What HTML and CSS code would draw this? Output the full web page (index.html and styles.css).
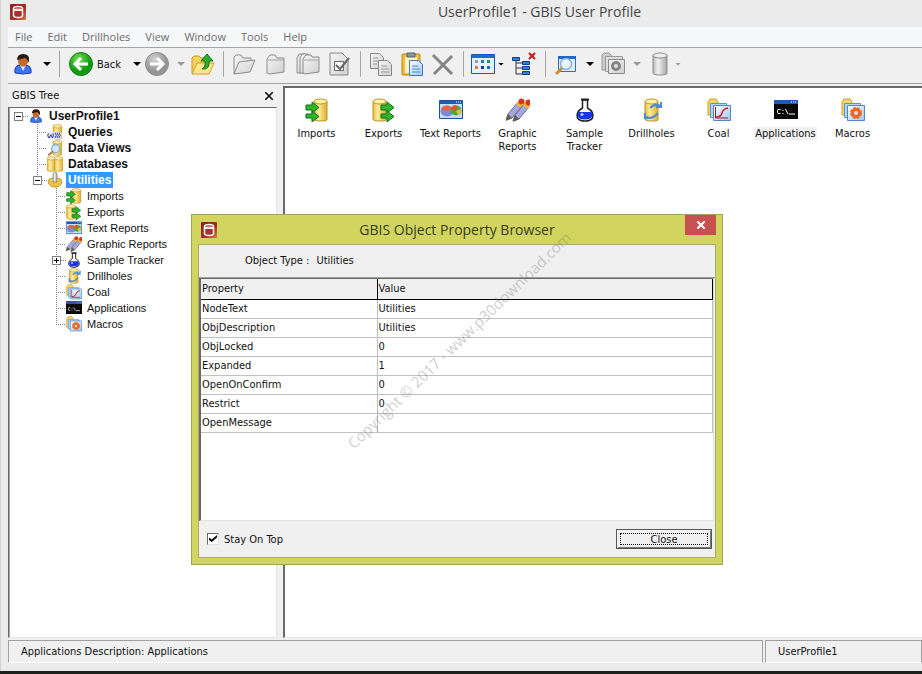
FILE: index.html
```html
<!DOCTYPE html>
<html lang="en">
<head>
  <meta charset="UTF-8">
  <meta name="viewport" content="width=device-width, initial-scale=1.0">
  <title>UserProfile1 - GBIS User Profile</title>
  <link rel="stylesheet" href="styles.css">
</head>
<body>

<!-- Icon set -->
<svg class="sprite" width="0" height="0" aria-hidden="true">
  <defs>
    <linearGradient id="gold"><stop offset="0" stop-color="#e8b83a"/><stop offset=".35" stop-color="#ffee9c"/><stop offset="1" stop-color="#e0ab2c"/></linearGradient>
    <linearGradient id="grey"><stop offset="0" stop-color="#b5b5b5"/><stop offset=".35" stop-color="#f2f2f2"/><stop offset="1" stop-color="#a4a4a4"/></linearGradient>
    <linearGradient id="paper" x2="1" y2="1"><stop offset="0" stop-color="#f6f6f6"/><stop offset="1" stop-color="#cfcfcf"/></linearGradient>
    <linearGradient id="sky" x2="1" y2="1"><stop offset="0" stop-color="#ffffff"/><stop offset="1" stop-color="#9cc8f4"/></linearGradient>
    <radialGradient id="greenBall" cx=".4" cy=".3"><stop offset="0" stop-color="#7be05a"/><stop offset="1" stop-color="#129a12"/></radialGradient>
    <radialGradient id="greyBall" cx=".4" cy=".3"><stop offset="0" stop-color="#d4d4d4"/><stop offset="1" stop-color="#959595"/></radialGradient>
    <linearGradient id="red" x2="1" y2="1"><stop offset="0" stop-color="#8e1f1f"/><stop offset=".6" stop-color="#a62c28"/><stop offset="1" stop-color="#d9803c"/></linearGradient>
  </defs>
  <symbol id="i-logo" viewBox="0 0 16 16">
    <rect width="16" height="16" rx="1" fill="url(#red)"/>
    <path d="M3.500 4.500q0-2 4.500-2t4.500 2v7q0 2-4.500 2t-4.500-2z" fill="#a83030" stroke="#fff" stroke-width="1.500"/>
    <path d="M3.500 5h9v2h-9z" fill="#fff"/><ellipse cx="8" cy="4.500" rx="3" ry="1" fill="#c98080"/>
  </symbol>
  <symbol id="i-user" viewBox="0 0 24 24">
    <path d="M4 21q-1-7 4-8h7q6 1 5 8-8 2-16 0z" fill="#3f74f0" stroke="#1c3fa8"/>
    <path d="M9 13h6l-3 6z" fill="#dfe9ff"/>
    <ellipse cx="12" cy="9" rx="5" ry="5.500" fill="#c66a2a"/>
    <path d="M6 8q0-6 6-6 7 0 6 7l-1 2q0-4-3-5-4 1-8 2z" fill="#2b1a12"/>
  </symbol>
  <symbol id="i-back" viewBox="0 0 24 24">
    <circle cx="12" cy="12" r="11.500" fill="url(#greenBall)" stroke="#0e8010"/>
    <path d="M19 12H6m6-6-6 6 6 6" fill="none" stroke="#fff" stroke-width="3"/>
  </symbol>
  <symbol id="i-forward" viewBox="0 0 24 24">
    <circle cx="12" cy="12" r="11.500" fill="url(#greyBall)" stroke="#8c8c8c"/>
    <path d="M5 12h13m-6-6 6 6-6 6" fill="none" stroke="#fff" stroke-width="3"/>
  </symbol>
  <symbol id="i-up" viewBox="0 0 24 24">
    <path d="M1 21V6l2-2h5l2 2h8v15z" fill="#f5d25a" stroke="#c99a20"/>
    <path d="M1 22 6 11h17l-5 11z" fill="#ffe68a" stroke="#d0a028"/>
    <path d="M11 17q4-2 3-8h-4l6-7 6 7h-4q1 9-7 8z" fill="#2fae2a" stroke="#14701a"/>
  </symbol>
  <symbol id="i-open" viewBox="0 0 24 24">
    <path d="M2 22V5l2-2h5l2 3h8v5" fill="url(#paper)" stroke="#8d8d8d"/>
    <path d="M2 22 7 10l16-2-5 12z" fill="url(#paper)" stroke="#8d8d8d"/>
  </symbol>
  <symbol id="i-folder" viewBox="0 0 24 24">
    <path d="M3 21V7l3-4h5l2 3h7v14l-14 2z" fill="url(#paper)" stroke="#8d8d8d"/><path d="M4 8h16" stroke="#a5a5a5"/>
  </symbol>
  <symbol id="i-folders" viewBox="0 0 24 24">
    <g fill="url(#paper)" stroke="#8d8d8d"><path d="M1 21V6l2-4h6v19z"/><path d="M4 21V6l2-4h6v19z"/><path d="M7 21V7l3-4h5l1 2h7v15l-14 2z"/></g><path d="M8 8h14" stroke="#a5a5a5"/>
  </symbol>
  <symbol id="i-check" viewBox="0 0 24 24">
    <path d="M2 1h12l6 6v16H2z" fill="url(#paper)" stroke="#888"/>
    <path d="M6.500 9.500h9v9h-9z" fill="#fff" stroke="#666"/><path d="m8 13 4 4 9-11" fill="none" stroke="#666" stroke-width="2"/>
  </symbol>
  <symbol id="i-copy" viewBox="0 0 24 24">
    <g fill="url(#paper)" stroke="#888"><path d="M1.500 1.500h9l4 4v11h-13z"/><path d="M9.500 8.500h9l4 4v11h-13z"/></g>
    <path d="M4 6h5M4 9h5M4 12h4M12 14h6M12 17h8M12 20h8" stroke="#999"/>
  </symbol>
  <symbol id="i-paste" viewBox="0 0 24 24">
    <rect x="2" y="2" width="18" height="21" rx="1" fill="#f3bd38" stroke="#b88416"/><path d="M5 5h12v16H5z" fill="#fff3c4"/>
    <path d="M7 1h8v4H7z" fill="#8d949c" stroke="#59616b"/>
    <path d="M9.500 8.500h9l4 4v11h-13z" fill="url(#sky)" stroke="#3f76c0"/><path d="M12 14h6M12 17h8M12 20h8" stroke="#4f83c8"/>
  </symbol>
  <symbol id="i-delete" viewBox="0 0 24 24"><path d="M2 3 21 22M21 4 3 22" stroke="#858585" stroke-width="3"/></symbol>
  <symbol id="i-grid" viewBox="0 0 24 24">
    <path d="M.500 2.500h23v19H.500z" fill="#e6f1ff" stroke="#1858b0"/><path d="M1 3h22v3H1z" fill="#1d69cc"/>
    <path d="M4 8h3v3H4z" fill="#999"/><path d="M10 8h3v3h-3z" fill="#4a66b8"/><path d="M16 8h3v3h-3z" fill="#2a9c30"/>
    <path d="M4 14h3v3H4z" fill="#e07a3c"/><path d="M10 14h3v3h-3z" fill="#1c3e98"/><path d="M16 14h3v3h-3z" fill="#1a67c8"/>
  </symbol>
  <symbol id="i-tree" viewBox="0 0 24 24">
    <path d="M4 8v14h6M4 11h6M4 16h6" fill="none" stroke="#333"/>
    <g fill="#2f7ee0" stroke="#123f86"><path d="M.500 5.500h7v3h-7zM10.500 9.500h7v3h-7zM10.500 14.500h7v3h-7zM10.500 19.500h7v3h-7z"/></g>
    <path d="m17 1 6 6M23 1l-6 6" stroke="#cf1616" stroke-width="2"/>
  </symbol>
  <symbol id="i-search" viewBox="0 0 24 24">
    <path d="M4.500 4.500h17v15h-17z" fill="#ddefff" stroke="#2a71c4"/><path d="M4 4h18v3H4z" fill="#1d69cc"/>
    <circle cx="12" cy="12" r="5.500" fill="#e9f6ff" stroke="#8db2d4" stroke-width="1.500"/><path d="m8 16-6 6" stroke="#c99036" stroke-width="3"/>
  </symbol>
  <symbol id="i-camera" viewBox="0 0 24 24">
    <path d="M1 18V3l2-2h5l2 2v15z" fill="#ccc" stroke="#999"/><path d="M4.500 4.500h17v15h-17z" fill="#ddd" stroke="#999"/>
    <path d="M7.500 7.500h16v14h-16z" fill="url(#paper)" stroke="#8a8a8a"/><circle cx="15" cy="14" r="3.500" fill="none" stroke="#858585" stroke-width="3"/>
  </symbol>
  <symbol id="i-cylinder" viewBox="0 0 24 24">
    <path d="M5 3v18q0 2 7 2t7-2V3z" fill="url(#grey)" stroke="#8d8d8d"/><ellipse cx="12" cy="3.500" rx="7" ry="2.500" fill="#ececec" stroke="#8d8d8d"/>
  </symbol>
  <symbol id="i-gold" viewBox="0 0 24 24">
    <path d="M1 3v18q0 2 7 2t6-2V3z" fill="url(#gold)" stroke="#c29424"/><ellipse cx="7.500" cy="3.500" rx="6.500" ry="2.500" fill="#fff1a8" stroke="#c29424"/>
  </symbol>
  <symbol id="i-imports" viewBox="0 0 24 24">
    <use href="#i-gold" x="8" width="24" height="24"/>
    <g fill="#2fb52a" stroke="#0f6f14"><path d="M1 7h6V4l7 5.500L7 15v-3H1z"/><path d="M1 16h6v-3l7 5.500L7 24v-4H1z"/></g>
  </symbol>
  <symbol id="i-exports" viewBox="0 0 24 24">
    <use href="#i-gold" width="24" height="24"/>
    <g fill="#2fb52a" stroke="#0f6f14"><path d="M9 7h6V4l7 5.500-7 5.500v-3H9z"/><path d="M9 16h6v-3l7 5.500-7 5.500v-4H9z"/></g>
  </symbol>
  <symbol id="i-text" viewBox="0 0 24 24">
    <path d="M.500 2.500h23v18H.500z" fill="#c4e0fa" stroke="#1c4f9c"/><path d="M1 3h22v3H1z" fill="#1d5cb8"/><path d="M17 4h5" stroke="#fff" stroke-dasharray="1 1"/>
    <ellipse cx="8" cy="13" rx="6.500" ry="5.500" fill="#8188d8"/><path d="M2 11q5-7 12 0l-6 2z" fill="#e8623c"/>
    <ellipse cx="17" cy="12.500" rx="5.500" ry="5" fill="#49a83c"/><path d="M12 11q3-6 6-3l-1 5z" fill="#e84a30"/><path d="M17 13l5-2q1 5-3 6z" fill="#f0ba38"/>
  </symbol>
  <symbol id="i-pencils" viewBox="0 0 24 24">
    <g id="pencil"><path d="M0 22 2 16 12 4l4 4L6 20z" fill="#a6a8dc" stroke="#6a6a9c"/><path d="m0 23 2-7 4 4z" fill="#60603a"/><path d="m10 6 2-3 5 4-2 3z" fill="#f6b02a"/><circle cx="15.500" cy="3.500" r="3" fill="#d8361c"/></g>
    <use href="#pencil" x="7" y="1"/>
  </symbol>
  <symbol id="i-flask" viewBox="0 0 24 24">
    <path d="M9.500 2v8q-7 4-5 10 2 3 7.500 3t7.500-3q2-6-5-10V2z" fill="#fff" stroke="#222" stroke-width="1.500"/>
    <path d="M5.500 14h13q2 4-1 6.500-5.500 2-11 0-3-2.500-1-6.500z" fill="#1436e8"/><circle cx="9" cy="16.500" r="1.500" fill="#b4ccff"/><path d="M8 1.500h8" stroke="#222" stroke-width="2"/>
  </symbol>
  <symbol id="i-drill" viewBox="0 0 24 24">
    <use href="#i-gold" x="4" width="24" height="24"/>
    <path d="M10 10q5-5 10-2m1-4v5h-5M18 15q-6 7-12 4m-1-4v5h5" fill="none" stroke="#4b8ad0" stroke-width="2"/>
  </symbol>
  <symbol id="i-stack" viewBox="0 0 24 24">
    <path d="M1 17V4l2-3h6l2 3v13z" fill="#f8d76a" stroke="#c99f32"/>
    <path d="M3.500 5.500h16v14h-16z" fill="#b4d6f6" stroke="#5b92cc"/><path d="M6.500 7.500h17v15h-17z" fill="url(#sky)" stroke="#4f86c4"/>
  </symbol>
  <symbol id="i-coal" viewBox="0 0 24 24">
    <use href="#i-stack"/><path d="M8.500 9v11H21" fill="none" stroke="#a01820"/><path d="M9 19q5 0 6-4t6-5" fill="none" stroke="#c42030" stroke-width="1.500"/>
  </symbol>
  <symbol id="i-app" viewBox="0 0 24 24">
    <path d="M0 2h24v19H0z" fill="#080808"/><path d="M0 2h24v4H0z" fill="#1d5cb8"/><path d="M17 4h5" stroke="#fff" stroke-dasharray="1 1"/>
    <path d="M6.500 11.500H4l-.500 1v2l.500 1h2.500M9 12v1m0 2v1M11.500 11l2.500 5M15 16h6" fill="none" stroke="#fff"/>
  </symbol>
  <symbol id="i-macros" viewBox="0 0 24 24">
    <use href="#i-stack"/><circle cx="15" cy="15" r="5" fill="none" stroke="#ee7330" stroke-width="2" stroke-dasharray="3 1"/><circle cx="15" cy="15" r="3.500" fill="none" stroke="#ee6420" stroke-width="3"/>
  </symbol>
  <symbol id="i-queries" viewBox="0 0 24 24">
    <use href="#i-gold" x="8" width="24" height="24"/><rect y="12" width="22" height="11" rx="5" fill="#e7e9ff"/>
    <path d="M2 14q-2 4 1 7l3-5 2 5q3-3 1-7M12 13q4 4 0 8M15 13q4 4 0 8M18 13q4 4 0 8" fill="none" stroke="#30309c" stroke-width="1.500"/>
  </symbol>
  <symbol id="i-views" viewBox="0 0 24 24">
    <use href="#i-gold" x="8" width="24" height="24"/><circle cx="13" cy="13" r="6" fill="#cceaff" stroke="#86aecb" stroke-width="2"/><path d="m9 17-7 6" stroke="#b57d32" stroke-width="3"/>
  </symbol>
  <symbol id="i-databases" viewBox="0 0 24 24"><use href="#i-gold" x="-1" width="24" height="24"/><use href="#i-gold" x="10" width="24" height="24"/></symbol>
  <symbol id="i-utilities" viewBox="0 0 24 24">
    <path d="M2 13q0-4 10-4t10 4v4q-3 6-10 6T2 17z" fill="#ecc240" stroke="#b38418"/><path d="M7 12h10" stroke="#ffeb92" stroke-width="3"/>
    <path d="M9 2q3-3 6 0v13H9z" fill="url(#grey)" stroke="#777"/>
  </symbol>
</svg>

<div class="window">
  <header class="titlebar">
    <svg class="logo"><use href="#i-logo"/></svg>
    <h1 class="window-title">UserProfile1 - GBIS User Profile</h1>
  </header>

  <div class="client">
    <nav class="menu">
      <a href="#">File</a>
      <a href="#">Edit</a>
      <a href="#">Drillholes</a>
      <a href="#">View</a>
      <a href="#">Window</a>
      <a href="#">Tools</a>
      <a href="#">Help</a>
    </nav>

    <div class="toolbar">
      <div class="tools tools-nav">
        <button class="tool drop" aria-label="User"><svg><use href="#i-user"/></svg><i class="arrow"></i></button>
      </div>
      <div class="tools tools-go">
        <button class="tool back"><svg><use href="#i-back"/></svg><span>Back</span><i class="arrow"></i></button>
        <button class="tool drop" aria-label="Forward" disabled><svg><use href="#i-forward"/></svg><i class="arrow"></i></button>
        <button class="tool" aria-label="Up"><svg><use href="#i-up"/></svg></button>
      </div>
      <div class="tools tools-file">
        <button class="tool" aria-label="Open" disabled><svg><use href="#i-open"/></svg></button>
        <button class="tool" aria-label="Folder" disabled><svg><use href="#i-folder"/></svg></button>
        <button class="tool" aria-label="Folders" disabled><svg><use href="#i-folders"/></svg></button>
        <button class="tool" aria-label="Properties" disabled><svg><use href="#i-check"/></svg></button>
      </div>
      <div class="tools tools-edit">
        <button class="tool" aria-label="Copy" disabled><svg><use href="#i-copy"/></svg></button>
        <button class="tool" aria-label="Paste"><svg><use href="#i-paste"/></svg></button>
        <button class="tool" aria-label="Delete" disabled><svg><use href="#i-delete"/></svg></button>
      </div>
      <div class="tools tools-view">
        <button class="tool tight" aria-label="Icons"><svg><use href="#i-grid"/></svg><i class="arrow"></i></button>
        <button class="tool" aria-label="Hide tree"><svg><use href="#i-tree"/></svg></button>
      </div>
      <div class="tools tools-data">
        <button class="tool drop" aria-label="Preview"><svg><use href="#i-search"/></svg><i class="arrow"></i></button>
        <button class="tool drop" aria-label="Run macro" disabled><svg><use href="#i-camera"/></svg><i class="arrow"></i></button>
        <button class="tool tight" aria-label="Database" disabled><svg><use href="#i-cylinder"/></svg><i class="arrow"></i></button>
      </div>
    </div>

    <div class="panes">
      <aside class="side">
        <div class="side-head">
          <h2>GBIS Tree</h2>
          <button class="side-close" aria-label="Close tree"><svg viewBox="0 0 8 8"><path d="m0 0 8 8M8 0 0 8" stroke="#000" stroke-width="1.500"/></svg></button>
        </div>
        <ul class="tree">
          <li class="root">
            <div class="node strong"><button class="twist" aria-label="Collapse"></button><svg><use href="#i-user"/></svg><span>UserProfile1</span></div>
            <ul>
              <li><div class="node strong"><i class="joint"></i><svg><use href="#i-queries"/></svg><span>Queries</span></div></li>
              <li><div class="node strong"><i class="joint"></i><svg><use href="#i-views"/></svg><span>Data Views</span></div></li>
              <li><div class="node strong"><i class="joint"></i><svg><use href="#i-databases"/></svg><span>Databases</span></div></li>
              <li>
                <div class="node strong selected"><button class="twist" aria-label="Collapse"></button><svg><use href="#i-utilities"/></svg><span>Utilities</span></div>
                <ul>
                  <li><div class="node"><i class="joint"></i><svg><use href="#i-imports"/></svg><span>Imports</span></div></li>
                  <li><div class="node"><i class="joint"></i><svg><use href="#i-exports"/></svg><span>Exports</span></div></li>
                  <li><div class="node"><i class="joint"></i><svg><use href="#i-text"/></svg><span>Text Reports</span></div></li>
                  <li><div class="node"><i class="joint"></i><svg><use href="#i-pencils"/></svg><span>Graphic Reports</span></div></li>
                  <li><div class="node"><button class="twist plus" aria-label="Expand"></button><svg><use href="#i-flask"/></svg><span>Sample Tracker</span></div></li>
                  <li><div class="node"><i class="joint"></i><svg><use href="#i-drill"/></svg><span>Drillholes</span></div></li>
                  <li><div class="node"><i class="joint"></i><svg><use href="#i-coal"/></svg><span>Coal</span></div></li>
                  <li><div class="node"><i class="joint"></i><svg><use href="#i-app"/></svg><span>Applications</span></div></li>
                  <li><div class="node"><i class="joint"></i><svg><use href="#i-macros"/></svg><span>Macros</span></div></li>
                </ul>
              </li>
            </ul>
          </li>
        </ul>
      </aside>

      <main class="view">
        <ul class="icons">
          <li><svg><use href="#i-imports"/></svg><span>Imports</span></li>
          <li><svg><use href="#i-exports"/></svg><span>Exports</span></li>
          <li><svg><use href="#i-text"/></svg><span>Text Reports</span></li>
          <li><svg><use href="#i-pencils"/></svg><span>Graphic<br>Reports</span></li>
          <li><svg><use href="#i-flask"/></svg><span>Sample<br>Tracker</span></li>
          <li><svg><use href="#i-drill"/></svg><span>Drillholes</span></li>
          <li><svg><use href="#i-coal"/></svg><span>Coal</span></li>
          <li class="current"><svg><use href="#i-app"/></svg><span>Applications</span></li>
          <li><svg><use href="#i-macros"/></svg><span>Macros</span></li>
        </ul>
      </main>
    </div>

    <footer class="status">
      <div class="status-text">Applications Description: Applications</div>
      <div class="status-user">UserProfile1</div>
    </footer>
  </div>
</div>

<!-- Floating property window -->
<section class="dialog">
  <header class="dialog-head">
    <svg class="logo"><use href="#i-logo"/></svg>
    <h2 class="dialog-title">GBIS Object Property Browser</h2>
    <button class="dialog-x" aria-label="Close window"><svg viewBox="0 0 8 8"><path d="m0 0 8 8M8 0 0 8" stroke="#fff" stroke-width="2"/></svg></button>
  </header>
  <div class="dialog-body">
    <div class="object-type"><span>Object Type :</span><span>Utilities</span></div>
    <div class="grid">
      <table>
        <thead><tr><th class="prop">Property</th><th>Value</th></tr></thead>
        <tbody>
          <tr><td>NodeText</td><td>Utilities</td></tr>
          <tr><td>ObjDescription</td><td>Utilities</td></tr>
          <tr><td>ObjLocked</td><td>0</td></tr>
          <tr><td>Expanded</td><td>1</td></tr>
          <tr><td>OpenOnConfirm</td><td>0</td></tr>
          <tr><td>Restrict</td><td>0</td></tr>
          <tr><td>OpenMessage</td><td></td></tr>
        </tbody>
      </table>
    </div>
    <div class="dialog-foot">
      <label class="stay" for="stay"><input type="checkbox" id="stay" checked>Stay On Top</label>
      <button class="close-btn">Close</button>
    </div>
  </div>
  <div class="watermark">Copyright © 2017 - www.p30download.com</div>
</section>

</body>
</html>
```

FILE: styles.css
```css
* { box-sizing: border-box; margin: 0; padding: 0; }

body {
  font-family: "DejaVu Sans Condensed", "Noto Sans", sans-serif;
  font-size: 11px;
  line-height: 13px;
  color: #111;
  background: #1d211e;
  overflow: hidden;
}

ul { list-style: none; }
button { font: inherit; color: inherit; background: none; border: none; }
h1, h2 { font-weight: normal; }
.sprite { position: absolute; }

.window {
  display: flex;
  flex-direction: column;
  height: calc(100vh - 3px);
  padding: 0 0 8px 8px;
  background: #ebebeb;
  border-left: 1px solid #d2d2d2;
}

.titlebar {
  display: flex;
  align-items: center;
  height: 27px;
  padding: 0 0 4px 1px;
}

.logo { width: 16px; height: 16px; }

.window-title {
  flex: 1;
  padding-left: 131px;
  font-family: "Open Sans", "Noto Sans", sans-serif;
  font-size: 14px;
  line-height: 20px;
  text-align: center;
  color: #444;
}

.client {
  flex: 1;
  display: flex;
  flex-direction: column;
  min-height: 0;
  margin-left: -1px;
  background: #f0f0f0;
}

.menu {
  display: flex;
  gap: 15px;
  height: 21px;
  padding: 0 7px;
  align-items: center;
  background: #f6f7f8;
  border-bottom: 1px solid #a5a5a5;
  font-family: "Open Sans", "Noto Sans", sans-serif;
  font-size: 11px;
  line-height: 18px;
}

.menu a { color: #6b6b6b; text-decoration: none; }

/* toolbar */
.toolbar {
  display: flex;
  align-items: center;
  height: 36px;
  padding-bottom: 3px;
  border-bottom: 1px solid #a0a0a0;
}

.tools {
  display: flex;
  align-items: center;
  height: 26px;
  padding: 0 8px;
  border-left: 1px solid #a5a5a5;
}

.tools-nav { border-left: none; padding: 0 8px 0 3px; }
.tools-go { padding: 0 8px 0 9px; }
.tools-file { gap: 8px; }
.tools-edit { gap: 7px; }
.tools-view { gap: 8px; padding: 0 9px 0 7px; }
.tools-data { gap: 7px; }

.tool { display: flex; align-items: center; }
.tool svg { width: 24px; height: 24px; }
.tool.drop { gap: 8px; }
.tool.tight { gap: 3px; }
.tool.back { gap: 4px; }
.tool.back .arrow { margin: 0 4px 0 8px; }
.tools-go .drop { margin-right: 6px; }

.arrow {
  width: 8px;
  height: 4px;
  background: #000;
  clip-path: polygon(0 0, 100% 0, 50% 100%);
}

.tight .arrow { width: 6px; height: 3px; }
.tool:disabled .arrow { background: #999; }

/* panes */
.panes { flex: 1; display: flex; min-height: 0; }

.side {
  display: flex;
  flex-direction: column;
  width: 269px;
}

.side-head {
  display: flex;
  justify-content: space-between;
  align-items: center;
  height: 23px;
  padding: 0 4px;
}

.side-head h2 { font-size: 11px; }
.side-close { display: flex; }
.side-close svg { width: 8px; height: 8px; }

.tree {
  flex: 1;
  background: #fff;
  border: 1px solid #696969;
  border-right-color: #e3e3e3;
  border-bottom-color: #e3e3e3;
  box-shadow: inset 1px 0 #a0a0a0;
  font-family: "Liberation Sans", Arial, sans-serif;
}

.tree ul { padding-left: 19px; }

.tree ul li {
  background: repeating-linear-gradient(#808080 0 1px, transparent 1px 2px) 9px 0 / 1px 100% no-repeat;
}

.tree ul li:last-child { background-size: 1px 8px; }

.node {
  display: flex;
  align-items: center;
  height: 16px;
  white-space: nowrap;
}

.node svg { width: 16px; height: 16px; }
.node span { margin-left: 3px; padding: 0 2px; line-height: 16px; }
.strong { font-size: 12px; font-weight: bold; }
.selected span { background: #3399ff; color: #fff; }

.joint, .twist { width: 19px; height: 16px; }

.joint {
  background: repeating-linear-gradient(90deg, #808080 0 1px, transparent 1px 2px) 9px 8px / 10px 1px no-repeat;
}

.twist {
  background:
    linear-gradient(#000, #000) 7px 8px / 5px 1px no-repeat,
    linear-gradient(#fff, #fff) 6px 5px / 7px 7px no-repeat,
    linear-gradient(#808080, #808080) 5px 4px / 9px 9px no-repeat,
    repeating-linear-gradient(90deg, #808080 0 1px, transparent 1px 2px) 14px 8px / 5px 1px no-repeat;
}

.twist.plus {
  background:
    linear-gradient(#000, #000) 7px 8px / 5px 1px no-repeat,
    linear-gradient(#000, #000) 9px 6px / 1px 5px no-repeat,
    linear-gradient(#fff, #fff) 6px 5px / 7px 7px no-repeat,
    linear-gradient(#808080, #808080) 5px 4px / 9px 9px no-repeat,
    repeating-linear-gradient(90deg, #808080 0 1px, transparent 1px 2px) 14px 8px / 5px 1px no-repeat;
}

.view {
  flex: 1;
  margin: 2px 0 0 6px;
  background: #fff;
  border: 2px solid #696969;
  border-right: none;
  border-bottom: 1px solid #e3e3e3;
}

.icons { display: flex; flex-wrap: wrap; margin-left: -2px; padding-top: 10px; }

.icons li {
  display: flex;
  flex-direction: column;
  align-items: center;
  gap: 5px;
  width: 67px;
  text-align: center;
  white-space: nowrap;
}

.icons svg { width: 24px; height: 24px; }
.icons span { padding: 0 1px; }
.current span { background: #f0f0f0; }

.status {
  display: flex;
  gap: 2px;
  height: 25px;
  padding-top: 2px;
}

.status div {
  display: flex;
  align-items: center;
  border: 1px solid #a0a0a0;
  border-bottom-color: #fff;
  padding-left: 12px;
}

.status-text { flex: 1; }
.status-user { width: 157px; }

/* property window */
.dialog {
  position: absolute;
  left: 191px;
  top: 214px;
  display: flex;
  flex-direction: column;
  width: 532px;
  height: 351px;
  padding: 0 6px 6px;
  background: #d1d55f;
  border: 1px solid #a0a455;
}

.dialog-head {
  display: flex;
  align-items: center;
  height: 29px;
  padding-left: 3px;
}

.dialog-title {
  flex: 1;
  padding-left: 12px;
  font-family: "Open Sans", "Noto Sans", sans-serif;
  font-size: 14px;
  line-height: 20px;
  text-align: center;
  color: #3a3c1c;
}

.dialog-x {
  display: flex;
  align-self: flex-start;
  align-items: center;
  justify-content: center;
  width: 31px;
  height: 20px;
  background: #c75050;
}

.dialog-x svg { width: 8px; height: 8px; }

.dialog-body {
  flex: 1;
  display: flex;
  flex-direction: column;
  background: #f0f0f0;
  border: 1px solid #a9ad68;
}

.object-type {
  display: flex;
  gap: 7px;
  height: 33px;
  padding: 9px 0 0 46px;
  border-bottom: 1px solid #a0a0a0;
}

.grid {
  flex: 1;
  margin-right: 1px;
  background: #fff;
  border: 1px solid #696969;
  border-left-width: 2px;
  border-right-color: #e3e3e3;
  border-bottom-color: #e3e3e3;
}

.grid table { width: 100%; border-collapse: collapse; table-layout: fixed; }

.grid th, .grid td {
  height: 19px;
  padding: 0 1px;
  text-align: left;
  font-weight: normal;
  border-right: 1px solid #c0c0c0;
  border-bottom: 1px solid #c0c0c0;
}

.grid th { height: 20px; background: #f0f0f0; border-color: #000; }
.grid .prop { width: 176px; }

.dialog-foot {
  display: flex;
  justify-content: space-between;
  align-items: center;
  height: 36px;
  padding: 0 3px 0 8px;
}

.stay { display: flex; align-items: center; gap: 5px; }

.stay input {
  appearance: none;
  width: 12px;
  height: 12px;
  background: #fff;
  border: 1px solid #696969;
  border-right-color: #e3e3e3;
  border-bottom-color: #e3e3e3;
}

.stay input:checked::before {
  content: "";
  display: block;
  width: 8px;
  height: 7px;
  margin: 1px;
  background: #000;
  clip-path: polygon(0 35%, 35% 65%, 100% 0, 100% 35%, 35% 100%, 0 70%);
}

.close-btn {
  width: 96px;
  height: 20px;
  background: #f0f0f0;
  border: 1px solid #555;
  box-shadow: inset 1px 1px #fff, inset -1px -1px #777;
  outline: 1px dotted #000;
  outline-offset: -5px;
}

.watermark {
  position: absolute;
  left: 267px;
  top: 125px;
  transform: translate(-50%, -50%) rotate(-44deg);
  white-space: nowrap;
  font-family: "Open Sans", sans-serif;
  font-size: 15px;
  line-height: 18px;
  color: rgba(110, 110, 110, 0.35);
  pointer-events: none;
}
```
